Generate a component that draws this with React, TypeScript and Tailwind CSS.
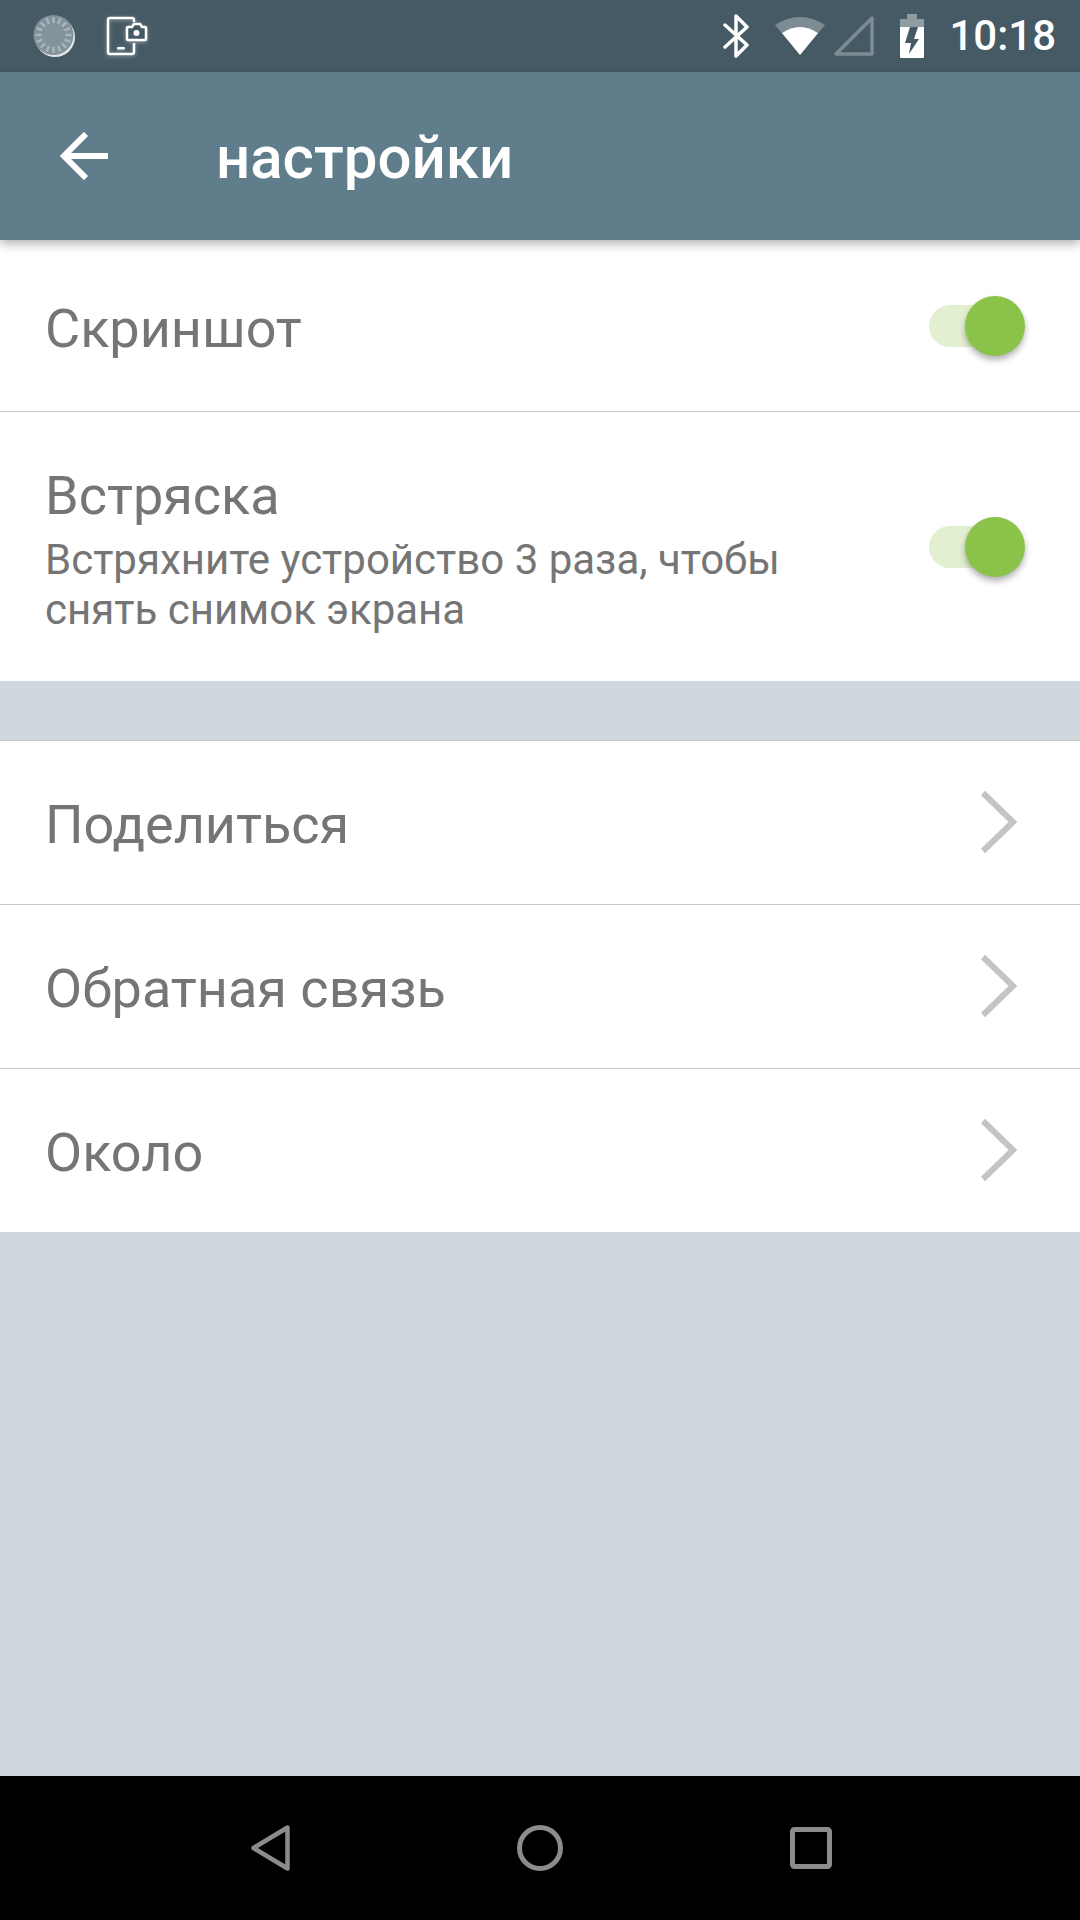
function Toggle() {
  return (
    <div className="relative h-[42px] w-[81px] shrink-0 rounded-full bg-[#e2efd0]">
      <div className="absolute right-[-15px] top-[-9px] h-[60px] w-[60px] rounded-full bg-[#8bc34a] shadow-[0_4px_6px_rgba(0,0,0,0.3)]" />
    </div>
  )
}

function Chevron() {
  return (
    <svg width="40" height="64" viewBox="0 0 40 64" fill="none" className="mt-[-2px] shrink-0">
      <path d="M3 3 L33 32 L3 61" stroke="#c4c4c4" strokeWidth="6" strokeLinecap="butt" strokeLinejoin="miter" />
    </svg>
  )
}

function LinkRow({ label, last }: { label: string; last?: boolean }) {
  return (
    <div className={`flex items-center justify-between bg-white pl-[45px] pr-[60px] ${last ? 'h-[163px]' : 'h-[164px] border-b border-[#c8c8c8]'}`}>
      <span className="mt-[4px] text-[54px] leading-none text-[#757575]">{label}</span>
      <Chevron />
    </div>
  )
}

export default function App() {
  return (
    <div className="flex h-[1920px] w-[1080px] flex-col overflow-hidden bg-[#cfd8df] font-['Roboto',sans-serif]">
      {/* status bar */}
      <div className="flex h-[72px] shrink-0 items-center justify-between bg-[#455a64] pl-[32px] pr-[24px]">
        <div className="flex items-center gap-[30px]">
          <svg width="44" height="44" viewBox="0 0 44 44">
            <circle cx="23" cy="23" r="20" fill="#fff" fillOpacity="0.85" />
            <circle cx="21.5" cy="21" r="20" fill="#82939b" />
            <g stroke="#a9b5ba" strokeWidth="2.5">
              {Array.from({ length: 16 }).map((_, i) => (
                <line key={i} x1="21.5" y1="3" x2="21.5" y2="9" transform={`rotate(${i * 22.5} 21.5 21)`} />
              ))}
            </g>
          </svg>
          <svg width="42" height="42" viewBox="0 0 42 42" fill="none" className="drop-shadow-[0_1px_2px_rgba(255,255,255,0.4)]">
            <path d="M28 7 V5 a2 2 0 0 0 -2 -2 H4 a2 2 0 0 0 -2 2 V37 a2 2 0 0 0 2 2 H26 a2 2 0 0 0 2 -2 V28" stroke="#fff" strokeWidth="2.5" />
            <rect x="11" y="32" width="8" height="2.5" rx="1" fill="#fff" />
            <path d="M22 12 h4 l2 -3 h6 l2 3 h3 a1 1 0 0 1 1 1 v11 a1 1 0 0 1 -1 1 h-17 a1 1 0 0 1 -1 -1 v-11 a1 1 0 0 1 1 -1z" fill="#455a64" stroke="#fff" strokeWidth="2.5" />
            <circle cx="30.5" cy="18" r="3" fill="#fff" />
          </svg>
        </div>
        <div className="flex items-center">
          <svg width="28" height="44" viewBox="0 0 28 44" fill="none" className="mr-[24px]">
            <path d="M3 11 L25 31 L14 42 V2 L25 13 L3 33" stroke="#fff" strokeWidth="3.5" strokeLinejoin="round" strokeLinecap="round" />
          </svg>
          <svg width="52" height="42" viewBox="0 0 52 42" className="mr-[7px]">
            <path d="M26 40 L1 10 Q26 -6 51 10 Z" fill="#fff" fillOpacity="0.3" />
            <path d="M26 40 L8 18 Q26 6 44 18 Z" fill="#fff" />
          </svg>
          <svg width="42" height="42" viewBox="0 0 42 42" fill="none" className="mr-[24px]">
            <path d="M3 39 L39 3 V39 Z" stroke="#fff" strokeOpacity="0.3" strokeWidth="3.5" strokeLinejoin="round" />
          </svg>
          <svg width="26" height="44" viewBox="0 0 26 44" className="mr-[24px]">
            <path d="M8 0 H18 V5 H24 a1 1 0 0 1 1 1 V13 H1 V6 a1 1 0 0 1 1 -1 H8 Z" fill="#fff" fillOpacity="0.4" />
            <path d="M1 13 H25 V43 a1 1 0 0 1 -1 1 H2 a1 1 0 0 1 -1 -1 Z" fill="#fff" />
            <path d="M11 13 H19 L15 25 H20 L10 40 L12 29 H6 Z" fill="#455a64" />
          </svg>
          <span className="text-[42px] font-medium leading-none text-white">10:18</span>
        </div>
      </div>

      {/* app bar */}
      <div className="relative z-10 flex h-[168px] shrink-0 items-center bg-[#607d8b] pl-[60px] shadow-[0_4px_10px_rgba(0,0,0,0.3)]">
        <svg width="48" height="48" viewBox="0 0 48 48" fill="none" className="mt-[-1px] shrink-0">
          <path d="M48 24 H4 M26 2 L4 24 L26 46" stroke="#fff" strokeWidth="6" />
        </svg>
        <span className="ml-[108px] mt-[4px] text-[60px] font-medium leading-none text-white">настройки</span>
      </div>

      {/* toggles */}
      <div className="flex h-[172px] shrink-0 items-center justify-between border-b border-[#c8c8c8] bg-white pl-[45px] pr-[70px]">
        <span className="mt-[6px] text-[54px] leading-none text-[#757575]">Скриншот</span>
        <Toggle />
      </div>
      <div className="flex h-[269px] shrink-0 items-center justify-between bg-white pl-[45px] pr-[70px]">
        <div className="flex flex-col pt-[8px]">
          <span className="text-[54px] leading-[60px] text-[#757575]">Встряска</span>
          <span className="mt-[9px] w-[780px] text-[42px] leading-[50px] text-[#757575]">
            Встряхните устройство 3 раза, чтобы снять снимок экрана
          </span>
        </div>
        <Toggle />
      </div>

      <div className="h-[60px] shrink-0 border-b border-[#c8c8c8]" />

      <LinkRow label="Поделиться" />
      <LinkRow label="Обратная связь" />
      <LinkRow label="Около" last />

      <div className="flex-1" />

      {/* nav bar */}
      <div className="flex h-[144px] shrink-0 items-center justify-center bg-black">
        <div className="ml-[3px] flex w-[581px] items-center justify-between">
          <svg width="39" height="46" viewBox="0 0 39 46" fill="none">
            <path d="M36.5 2.5 L2.5 23 L36.5 43.5 Z" stroke="#8c8c8c" strokeWidth="4.5" strokeLinejoin="round" />
          </svg>
          <svg width="46" height="46" viewBox="0 0 46 46" fill="none">
            <circle cx="23" cy="23" r="20.5" stroke="#8c8c8c" strokeWidth="5" />
          </svg>
          <svg width="42" height="42" viewBox="0 0 42 42" fill="none">
            <rect x="2.5" y="2.5" width="37" height="37" rx="2" stroke="#8c8c8c" strokeWidth="5" />
          </svg>
        </div>
      </div>
    </div>
  )
}
